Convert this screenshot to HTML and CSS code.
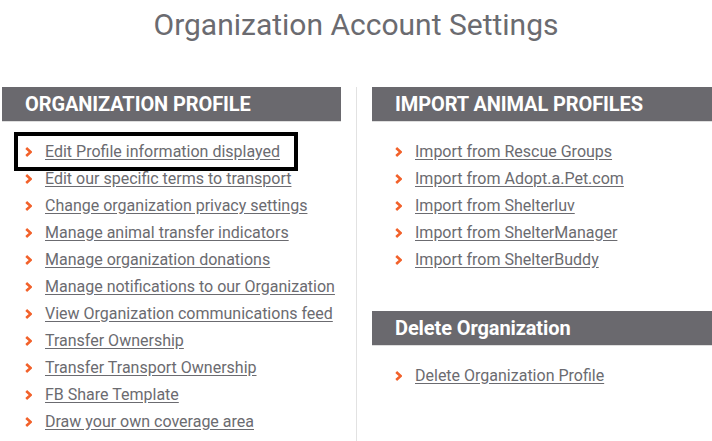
FILE: index.html
```html
<!DOCTYPE html>
<html>
<head>
<meta charset="utf-8">
<link rel="stylesheet" href="styles.css">
</head>
<body>
<h1 class="title">Organization Account Settings</h1>
<div class="columns">
  <section class="col col-left">
    <h2 class="section-head upper">ORGANIZATION PROFILE</h2>
    <ul class="links">
      <li class="item highlight"><svg class="chev" viewBox="0 0 7 10"><polyline points="1.2,1 5.6,5 1.2,9"/></svg><a href="#">Edit Profile information displayed</a></li>
      <li class="item"><svg class="chev" viewBox="0 0 7 10"><polyline points="1.2,1 5.6,5 1.2,9"/></svg><a href="#">Edit our specific terms to transport</a></li>
      <li class="item"><svg class="chev" viewBox="0 0 7 10"><polyline points="1.2,1 5.6,5 1.2,9"/></svg><a href="#">Change organization privacy settings</a></li>
      <li class="item"><svg class="chev" viewBox="0 0 7 10"><polyline points="1.2,1 5.6,5 1.2,9"/></svg><a href="#">Manage animal transfer indicators</a></li>
      <li class="item"><svg class="chev" viewBox="0 0 7 10"><polyline points="1.2,1 5.6,5 1.2,9"/></svg><a href="#">Manage organization donations</a></li>
      <li class="item"><svg class="chev" viewBox="0 0 7 10"><polyline points="1.2,1 5.6,5 1.2,9"/></svg><a href="#">Manage notifications to our Organization</a></li>
      <li class="item"><svg class="chev" viewBox="0 0 7 10"><polyline points="1.2,1 5.6,5 1.2,9"/></svg><a href="#">View Organization communications feed</a></li>
      <li class="item"><svg class="chev" viewBox="0 0 7 10"><polyline points="1.2,1 5.6,5 1.2,9"/></svg><a href="#">Transfer Ownership</a></li>
      <li class="item"><svg class="chev" viewBox="0 0 7 10"><polyline points="1.2,1 5.6,5 1.2,9"/></svg><a href="#">Transfer Transport Ownership</a></li>
      <li class="item"><svg class="chev" viewBox="0 0 7 10"><polyline points="1.2,1 5.6,5 1.2,9"/></svg><a href="#">FB Share Template</a></li>
      <li class="item"><svg class="chev" viewBox="0 0 7 10"><polyline points="1.2,1 5.6,5 1.2,9"/></svg><a href="#">Draw your own coverage area</a></li>
    </ul>
  </section>
  <section class="col col-right">
    <h2 class="section-head upper">IMPORT ANIMAL PROFILES</h2>
    <ul class="links">
      <li class="item"><svg class="chev" viewBox="0 0 7 10"><polyline points="1.2,1 5.6,5 1.2,9"/></svg><a href="#">Import from Rescue Groups</a></li>
      <li class="item"><svg class="chev" viewBox="0 0 7 10"><polyline points="1.2,1 5.6,5 1.2,9"/></svg><a href="#">Import from Adopt.a.Pet.com</a></li>
      <li class="item"><svg class="chev" viewBox="0 0 7 10"><polyline points="1.2,1 5.6,5 1.2,9"/></svg><a href="#">Import from Shelterluv</a></li>
      <li class="item"><svg class="chev" viewBox="0 0 7 10"><polyline points="1.2,1 5.6,5 1.2,9"/></svg><a href="#">Import from ShelterManager</a></li>
      <li class="item"><svg class="chev" viewBox="0 0 7 10"><polyline points="1.2,1 5.6,5 1.2,9"/></svg><a href="#">Import from ShelterBuddy</a></li>
    </ul>
    <h2 class="section-head second">Delete Organization</h2>
    <ul class="links">
      <li class="item"><svg class="chev" viewBox="0 0 7 10"><polyline points="1.2,1 5.6,5 1.2,9"/></svg><a href="#">Delete Organization Profile</a></li>
    </ul>
  </section>
</div>
</body>
</html>
```
FILE: styles.css
```css
html, body {
  margin: 0;
  padding: 0;
  background: #ffffff;
  font-family: Roboto, "Liberation Sans", Arial, sans-serif;
  color: #6b6b70;
  overflow: hidden;
}

.title {
  margin: 0;
  height: 50px;
  line-height: 50px;
  text-align: center;
  font-size: 30px;
  font-weight: 400;
  color: #6b6b70;
}

.columns {
  display: flex;
  margin-top: 37px;
  padding-left: 2px;
}

.col-left {
  width: 339px;
  padding-right: 15px;
  border-right: 1px solid #e2e2e2;
  min-height: 360px;
}

.col-right {
  flex: 1;
  margin-left: 15px;
}

.section-head {
  margin: 0;
  height: 34px;
  line-height: 34px;
  padding-left: 23px;
  background: #6a696e;
  color: #ffffff;
  font-size: 20px;
  font-weight: 700;
  letter-spacing: -0.1px;
  border-bottom: 1px solid #dedede;
}

.section-head.second {
  margin-top: 23px;
}

.links {
  list-style: none;
  margin: 0;
  padding: 15.5px 0 15.5px 0;
}

.item {
  display: flex;
  align-items: center;
  height: 27px;
  padding-left: 23px;
  font-size: 16px;
}

.item.highlight {
  width: max-content;
  margin-left: 18px;
  padding-left: 5px;
  padding-right: 12px;
  outline: 4px solid #000000;
  outline-offset: 2px;
}

.chev {
  width: 7px;
  height: 10px;
  margin-right: 13px;
  margin-top: 1px;
  flex: none;
}

.chev polyline {
  fill: none;
  stroke: #f2612a;
  stroke-width: 2.6;
}

.item a {
  color: #6b6b70;
  text-decoration: underline;
  text-underline-offset: 2px;
}
```
